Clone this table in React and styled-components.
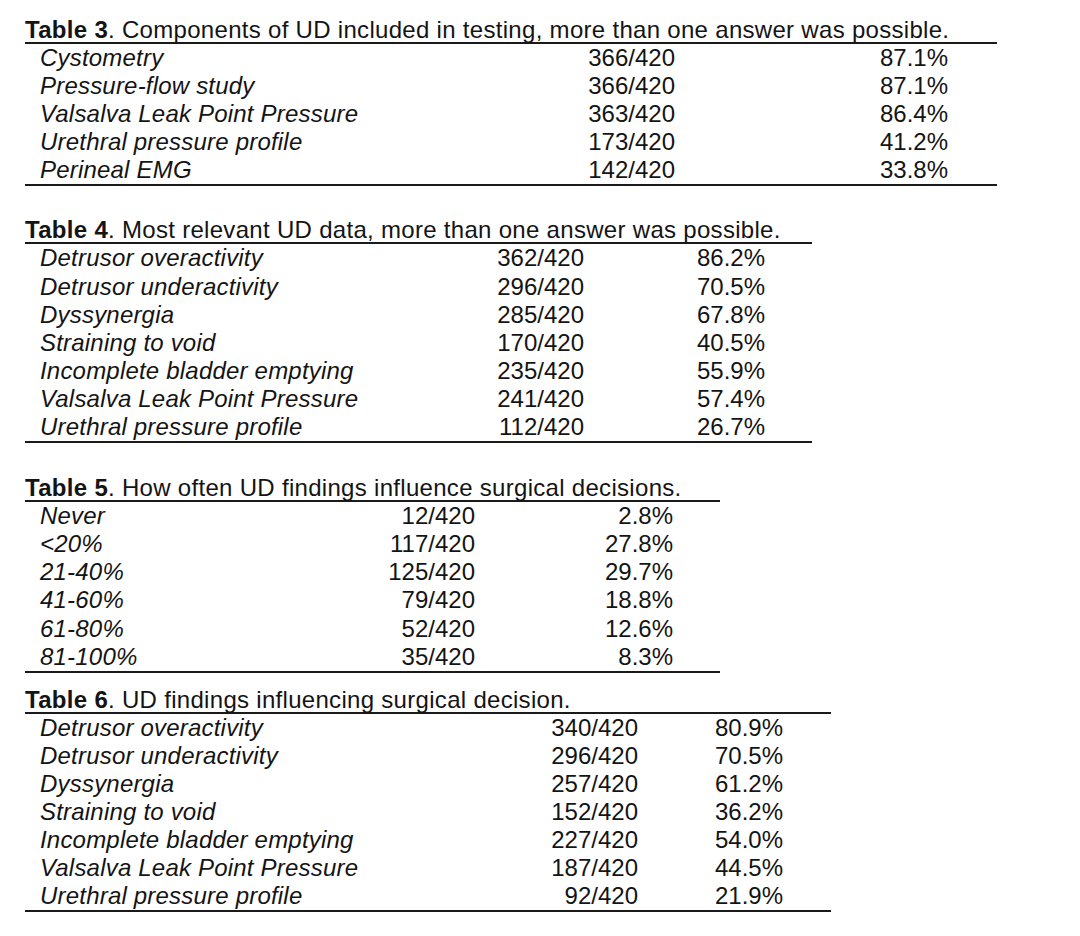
import React from 'react'
import styled, { createGlobalStyle } from 'styled-components'

const GlobalStyle = createGlobalStyle`
  html, body {
    margin: 0;
    padding: 0;
    background: #ffffff;
  }
  body {
    font-family: 'Liberation Sans', Arial, sans-serif;
    color: #141414;
  }
`

const Page = styled('div')`
  display: flex;
  flex-direction: column;
  align-items: flex-start;
  padding: 14px 0 0 25px;
`

const TableBlock = styled('section')`
  width: ${({ width }) => width}px;
  margin-top: ${({ gap }) => gap}px;
`

// caption text sits low, its descenders touching the top rule
const Caption = styled('div')`
  font-size: 24px;
  line-height: 24px;
  padding-top: 4px;
  letter-spacing: 0.3px;
  white-space: nowrap;
  border-bottom: 2px solid #1a1a1a;

  b {
    font-weight: bold;
  }
`

const Body = styled('div')`
  display: flex;
  flex-direction: column;
  border-bottom: 2px solid #1a1a1a;
`

const Row = styled('div')`
  display: grid;
  grid-template-columns: ${({ cols }) => cols};
  font-size: 24px;
  line-height: 28.1px;
  white-space: nowrap;
`

const Label = styled('span')`
  font-style: italic;
  letter-spacing: 0.2px;
  padding-left: 15px;
`

const Num = styled('span')`
  text-align: right;
`

const tables = [
  {
    id: 3,
    gap: 0,
    title: 'Components of UD included in testing, more than one answer was possible.',
    right: 997,
    countEnd: 675,
    pctEnd: 948,
    rows: [
      ['Cystometry', '366/420', '87.1%'],
      ['Pressure-flow study', '366/420', '87.1%'],
      ['Valsalva Leak Point Pressure', '363/420', '86.4%'],
      ['Urethral pressure profile', '173/420', '41.2%'],
      ['Perineal EMG', '142/420', '33.8%'],
    ],
  },
  {
    id: 4,
    gap: 28,
    title: 'Most relevant UD data, more than one answer was possible.',
    right: 812,
    countEnd: 584,
    pctEnd: 765,
    rows: [
      ['Detrusor overactivity', '362/420', '86.2%'],
      ['Detrusor underactivity', '296/420', '70.5%'],
      ['Dyssynergia', '285/420', '67.8%'],
      ['Straining to void', '170/420', '40.5%'],
      ['Incomplete bladder emptying', '235/420', '55.9%'],
      ['Valsalva Leak Point Pressure', '241/420', '57.4%'],
      ['Urethral pressure profile', '112/420', '26.7%'],
    ],
  },
  {
    id: 5,
    gap: 29,
    title: 'How often UD findings influence surgical decisions.',
    right: 720,
    countEnd: 475,
    pctEnd: 673,
    rows: [
      ['Never', '12/420', '2.8%'],
      ['<20%', '117/420', '27.8%'],
      ['21-40%', '125/420', '29.7%'],
      ['41-60%', '79/420', '18.8%'],
      ['61-80%', '52/420', '12.6%'],
      ['81-100%', '35/420', '8.3%'],
    ],
  },
  {
    id: 6,
    gap: 11,
    title: 'UD findings influencing surgical decision.',
    right: 831,
    countEnd: 638,
    pctEnd: 783,
    rows: [
      ['Detrusor overactivity', '340/420', '80.9%'],
      ['Detrusor underactivity', '296/420', '70.5%'],
      ['Dyssynergia', '257/420', '61.2%'],
      ['Straining to void', '152/420', '36.2%'],
      ['Incomplete bladder emptying', '227/420', '54.0%'],
      ['Valsalva Leak Point Pressure', '187/420', '44.5%'],
      ['Urethral pressure profile', '92/420', '21.9%'],
    ],
  },
]

const LEFT = 25
const COUNT_W = 110

const SurveyTable = ({ id, gap, title, right, countEnd, pctEnd, rows }) => {
  const cols = `${countEnd - LEFT - COUNT_W}px ${COUNT_W}px ${pctEnd - countEnd}px`
  return (
    <TableBlock width={right - LEFT} gap={gap}>
      <Caption>
        <b>Table {id}</b>. {title}
      </Caption>
      <Body>
        {rows.map(([label, count, pct]) => (
          <Row key={label} cols={cols}>
            <Label>{label}</Label>
            <Num>{count}</Num>
            <Num>{pct}</Num>
          </Row>
        ))}
      </Body>
    </TableBlock>
  )
}

export default function App() {
  return (
    <>
      <GlobalStyle />
      <Page>
        {tables.map((t) => (
          <SurveyTable key={t.id} {...t} />
        ))}
      </Page>
    </>
  )
}
